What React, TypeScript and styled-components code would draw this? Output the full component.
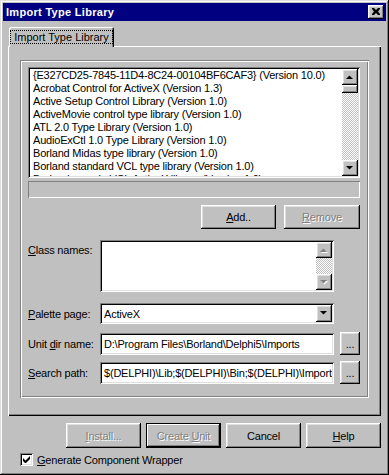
import React from "react";
import styled, { createGlobalStyle, css } from "styled-components";

const Global = createGlobalStyle`
  html, body { margin: 0; padding: 0; background: #c0c0c0; }
  body { font-family: "Liberation Sans", Arial, sans-serif; font-size: 11px; color: #000; letter-spacing: -0.2px; }
  * { box-sizing: border-box; }
`;

const raised = css`
  box-shadow: inset -1px -1px #000, inset 1px 1px #fff, inset -2px -2px #808080, inset 2px 2px #dfdfdf;
`;
const sunken = css`
  box-shadow: inset 1px 1px #808080, inset -1px -1px #fff, inset 2px 2px #000, inset -2px -2px #dfdfdf;
`;
const dither = css`
  background-color: #c0c0c0;
  background-image: repeating-conic-gradient(#fff 0 25%, #c0c0c0 0 50%);
  background-size: 2px 2px;
`;

const Window = styled.div`
  width: 389px;
  height: 475px;
  background: #c0c0c0;
  padding: 3px;
  display: flex;
  flex-direction: column;
  box-shadow: inset -1px -1px #000, inset 1px 1px #dfdfdf, inset -2px -2px #808080, inset 2px 2px #fff;
`;

const TitleBar = styled.div`
  height: 18px;
  background: #000080;
  display: flex;
  align-items: center;
  justify-content: space-between;
  padding: 0 2px 0 3px;
`;

const Title = styled.span`
  color: #fff;
  font-weight: bold;
  font-size: 11px;
  letter-spacing: 0.3px;
`;

const CloseButton = styled.div`
  width: 16px;
  height: 14px;
  background: #c0c0c0;
  display: flex;
  align-items: center;
  justify-content: center;
  padding: 0 1px 1px 0;
  ${raised}
`;

const Body = styled.div`
  flex: 1;
  display: flex;
  flex-direction: column;
  padding: 6px 5px 0 5px;
`;

const TabStrip = styled.div`
  height: 19px;
  display: flex;
  align-items: flex-end;
  padding-left: 1px;
`;

const Tab = styled.div`
  position: relative;
  z-index: 1;
  width: 105px;
  height: 20px;
  margin-bottom: -1px;
  background: #c0c0c0;
  border-radius: 2px 2px 0 0;
  display: flex;
  align-items: flex-start;
  justify-content: center;
  padding-top: 3px;
  box-shadow: inset 1px 1px #fff, inset -1px 0 #000, inset -2px 0 #808080;
`;

const FocusRect = styled.span`
  border: 1px dotted #000;
  padding: 0 3px;
  height: 14px;
  line-height: 12px;
  white-space: nowrap;
  letter-spacing: 0;
`;

const Panel = styled.div`
  height: 370px;
  padding: 14px 12px;
  box-shadow: inset 1px 1px #fff, inset -1px -1px #000, inset -2px -2px #808080;
`;

const Group = styled.div`
  height: 338px;
  padding: 7px 9px 0 8px;
  display: flex;
  flex-direction: column;
  box-shadow: inset 1px 1px #808080, inset -1px -1px #fff, inset 2px 2px #fff, inset -2px -2px #808080;
`;

const ListBox = styled.div`
  height: 111px;
  background: #fff;
  padding: 2px;
  display: flex;
  ${sunken}
`;

const Items = styled.div`
  flex: 1;
  overflow: hidden;
  padding-left: 3px;
`;

const Item = styled.div`
  height: 13px;
  line-height: 13px;
  white-space: nowrap;
`;

const ScrollBar = styled.div`
  width: 16px;
  display: flex;
  flex-direction: column;
`;

const ScrollButton = styled.div`
  width: 16px;
  height: 16px;
  flex: none;
  background: #c0c0c0;
  display: flex;
  align-items: center;
  justify-content: center;
  ${raised}
`;

const Thumb = styled.div`
  width: 16px;
  height: 8px;
  flex: none;
  background: #c0c0c0;
  ${raised}
`;

const Track = styled.div`
  flex: 1;
  ${dither}
`;

const StatusPanel = styled.div`
  height: 17px;
  margin-top: 3px;
  box-shadow: inset 1px 1px #808080, inset -1px -1px #fff;
`;

const ButtonRow = styled.div`
  margin-top: 7px;
  display: flex;
  justify-content: flex-end;
  gap: 8px;
`;

const Button = styled.div<{ $w?: number; $h?: number; $disabled?: boolean; $default?: boolean }>`
  width: ${(p) => p.$w ?? 75}px;
  height: ${(p) => p.$h ?? 24}px;
  flex: none;
  background: #c0c0c0;
  display: flex;
  align-items: center;
  justify-content: center;
  white-space: nowrap;
  color: ${(p) => (p.$disabled ? "#808080" : "#000")};
  text-shadow: ${(p) => (p.$disabled ? "1px 1px #fff" : "none")};
  ${(p) =>
    p.$default
      ? css`box-shadow: inset 0 0 0 1px #000, inset -2px -2px #000, inset 2px 2px #fff, inset -3px -3px #808080;`
      : raised}
`;

const ButtonText = styled.span`
  white-space: pre;
`;

const FieldRow = styled.div<{ $top: number; $align?: string }>`
  margin-top: ${(p) => p.$top}px;
  display: flex;
  align-items: ${(p) => p.$align ?? "center"};
`;

const Label = styled.div<{ $pt?: number }>`
  width: 72px;
  flex: none;
  white-space: nowrap;
  padding-top: ${(p) => p.$pt ?? 0}px;
`;

const Memo = styled.div`
  width: 234px;
  height: 52px;
  background: #fff;
  padding: 2px;
  display: flex;
  justify-content: flex-end;
  ${sunken}
`;

const Edit = styled.div<{ $h?: number }>`
  width: 234px;
  height: ${(p) => p.$h ?? 21}px;
  background: #fff;
  padding: 2px 2px 2px 4px;
  display: flex;
  align-items: center;
  white-space: nowrap;
  overflow: hidden;
  ${sunken}
`;

const EditText = styled.span`
  flex: 1;
  min-width: 0;
  overflow: hidden;
  text-overflow: clip;
`;

const DropButton = styled.div`
  width: 16px;
  height: 17px;
  flex: none;
  background: #c0c0c0;
  display: flex;
  align-items: center;
  justify-content: center;
  ${raised}
`;

const BrowseButton = styled(Button)`
  margin-left: 6px;
  align-items: flex-end;
  padding-bottom: 5px;
`;

const BottomBar = styled.div`
  margin-top: 7px;
  display: flex;
  justify-content: flex-end;
  gap: 5px;
`;

const CheckRow = styled.div`
  margin-top: 5px;
  padding-left: 12px;
  display: flex;
  align-items: center;
  gap: 4px;
`;

const CheckBox = styled.div`
  width: 13px;
  height: 13px;
  background: #fff;
  display: flex;
  align-items: center;
  justify-content: center;
  ${sunken}
`;

const Arrow = ({ dir, disabled }: { dir: "up" | "down"; disabled?: boolean }) => {
  const pts = dir === "up" ? "0,4 3.5,0.5 7,4" : "0,0 7,0 3.5,3.5";
  return (
    <svg width="8" height="5" viewBox="0 0 8 5">
      {disabled && <polygon points={pts} fill="#fff" transform="translate(1,1)" />}
      <polygon points={pts} fill={disabled ? "#808080" : "#000"} />
    </svg>
  );
};

const items = [
  "{E327CD25-7845-11D4-8C24-00104BF6CAF3} (Version 10.0)",
  "Acrobat Control for ActiveX (Version 1.3)",
  "Active Setup Control Library (Version 1.0)",
  "ActiveMovie control type library (Version 1.0)",
  "ATL 2.0 Type Library (Version 1.0)",
  "AudioExCtl 1.0 Type Library (Version 1.0)",
  "Borland Midas type library (Version 1.0)",
  "Borland standard VCL type library (Version 1.0)",
  "Borland sample VCL ActiveX library (Version 1.0)",
];

export default function App() {
  return (
    <>
      <Global />
      <Window>
        <TitleBar>
          <Title>Import Type Library</Title>
          <CloseButton>
            <svg width="8" height="7" viewBox="0 0 8 7">
              <path d="M0 0h2l2 2 2-2h2v1L6 3.5 8 6v1H6L4 5 2 7H0V6l2-2.5L0 1z" fill="#000" />
            </svg>
          </CloseButton>
        </TitleBar>
        <Body>
          <TabStrip>
            <Tab>
              <FocusRect>Import Type Library</FocusRect>
            </Tab>
          </TabStrip>
          <Panel>
            <Group>
              <ListBox>
                <Items>
                  {items.map((t) => (
                    <Item key={t}>{t}</Item>
                  ))}
                </Items>
                <ScrollBar>
                  <ScrollButton>
                    <Arrow dir="up" />
                  </ScrollButton>
                  <Thumb />
                  <Track />
                  <ScrollButton>
                    <Arrow dir="down" />
                  </ScrollButton>
                </ScrollBar>
              </ListBox>
              <StatusPanel />
              <ButtonRow>
                <Button>
                  <ButtonText>
                    <u>A</u>dd..
                  </ButtonText>
                </Button>
                <Button $w={76} $disabled>
                  <ButtonText>
                    <u>R</u>emove
                  </ButtonText>
                </Button>
              </ButtonRow>
              <FieldRow $top={11} $align="flex-start">
                <Label $pt={4}>
                  <u>C</u>lass names:
                </Label>
                <Memo>
                  <ScrollBar>
                    <ScrollButton>
                      <Arrow dir="up" disabled />
                    </ScrollButton>
                    <Track />
                    <ScrollButton>
                      <Arrow dir="down" disabled />
                    </ScrollButton>
                  </ScrollBar>
                </Memo>
              </FieldRow>
              <FieldRow $top={11}>
                <Label>
                  <u>P</u>alette page:
                </Label>
                <Edit>
                  <EditText>ActiveX</EditText>
                  <DropButton>
                    <Arrow dir="down" />
                  </DropButton>
                </Edit>
              </FieldRow>
              <FieldRow $top={8}>
                <Label>
                  Unit <u>d</u>ir name:
                </Label>
                <Edit $h={22}>
                  <EditText>D:\Program Files\Borland\Delphi5\Imports</EditText>
                </Edit>
                <BrowseButton $w={20} $h={23}>
                  <ButtonText>...</ButtonText>
                </BrowseButton>
              </FieldRow>
              <FieldRow $top={6}>
                <Label>
                  <u>S</u>earch path:
                </Label>
                <Edit $h={22}>
                  <EditText>$(DELPHI)\Lib;$(DELPHI)\Bin;$(DELPHI)\Imports</EditText>
                </Edit>
                <BrowseButton $w={20} $h={23}>
                  <ButtonText>...</ButtonText>
                </BrowseButton>
              </FieldRow>
            </Group>
          </Panel>
          <BottomBar>
            <Button $h={25} $disabled>
              <ButtonText>
                <u>I</u>nstall...
              </ButtonText>
            </Button>
            <Button $h={25} $disabled $default>
              <ButtonText>
                Create <u>U</u>nit
              </ButtonText>
            </Button>
            <Button $h={25}>
              <ButtonText>Cancel</ButtonText>
            </Button>
            <Button $h={25}>
              <ButtonText>
                <u>H</u>elp
              </ButtonText>
            </Button>
          </BottomBar>
          <CheckRow>
            <CheckBox>
              <svg width="7" height="7" viewBox="0 0 7 7">
                <path d="M0 2v3l2 2h1l4-4V0L2.5 4.5z" fill="#000" />
              </svg>
            </CheckBox>
            <span>
              <u>G</u>enerate Component Wrapper
            </span>
          </CheckRow>
        </Body>
      </Window>
    </>
  );
}
